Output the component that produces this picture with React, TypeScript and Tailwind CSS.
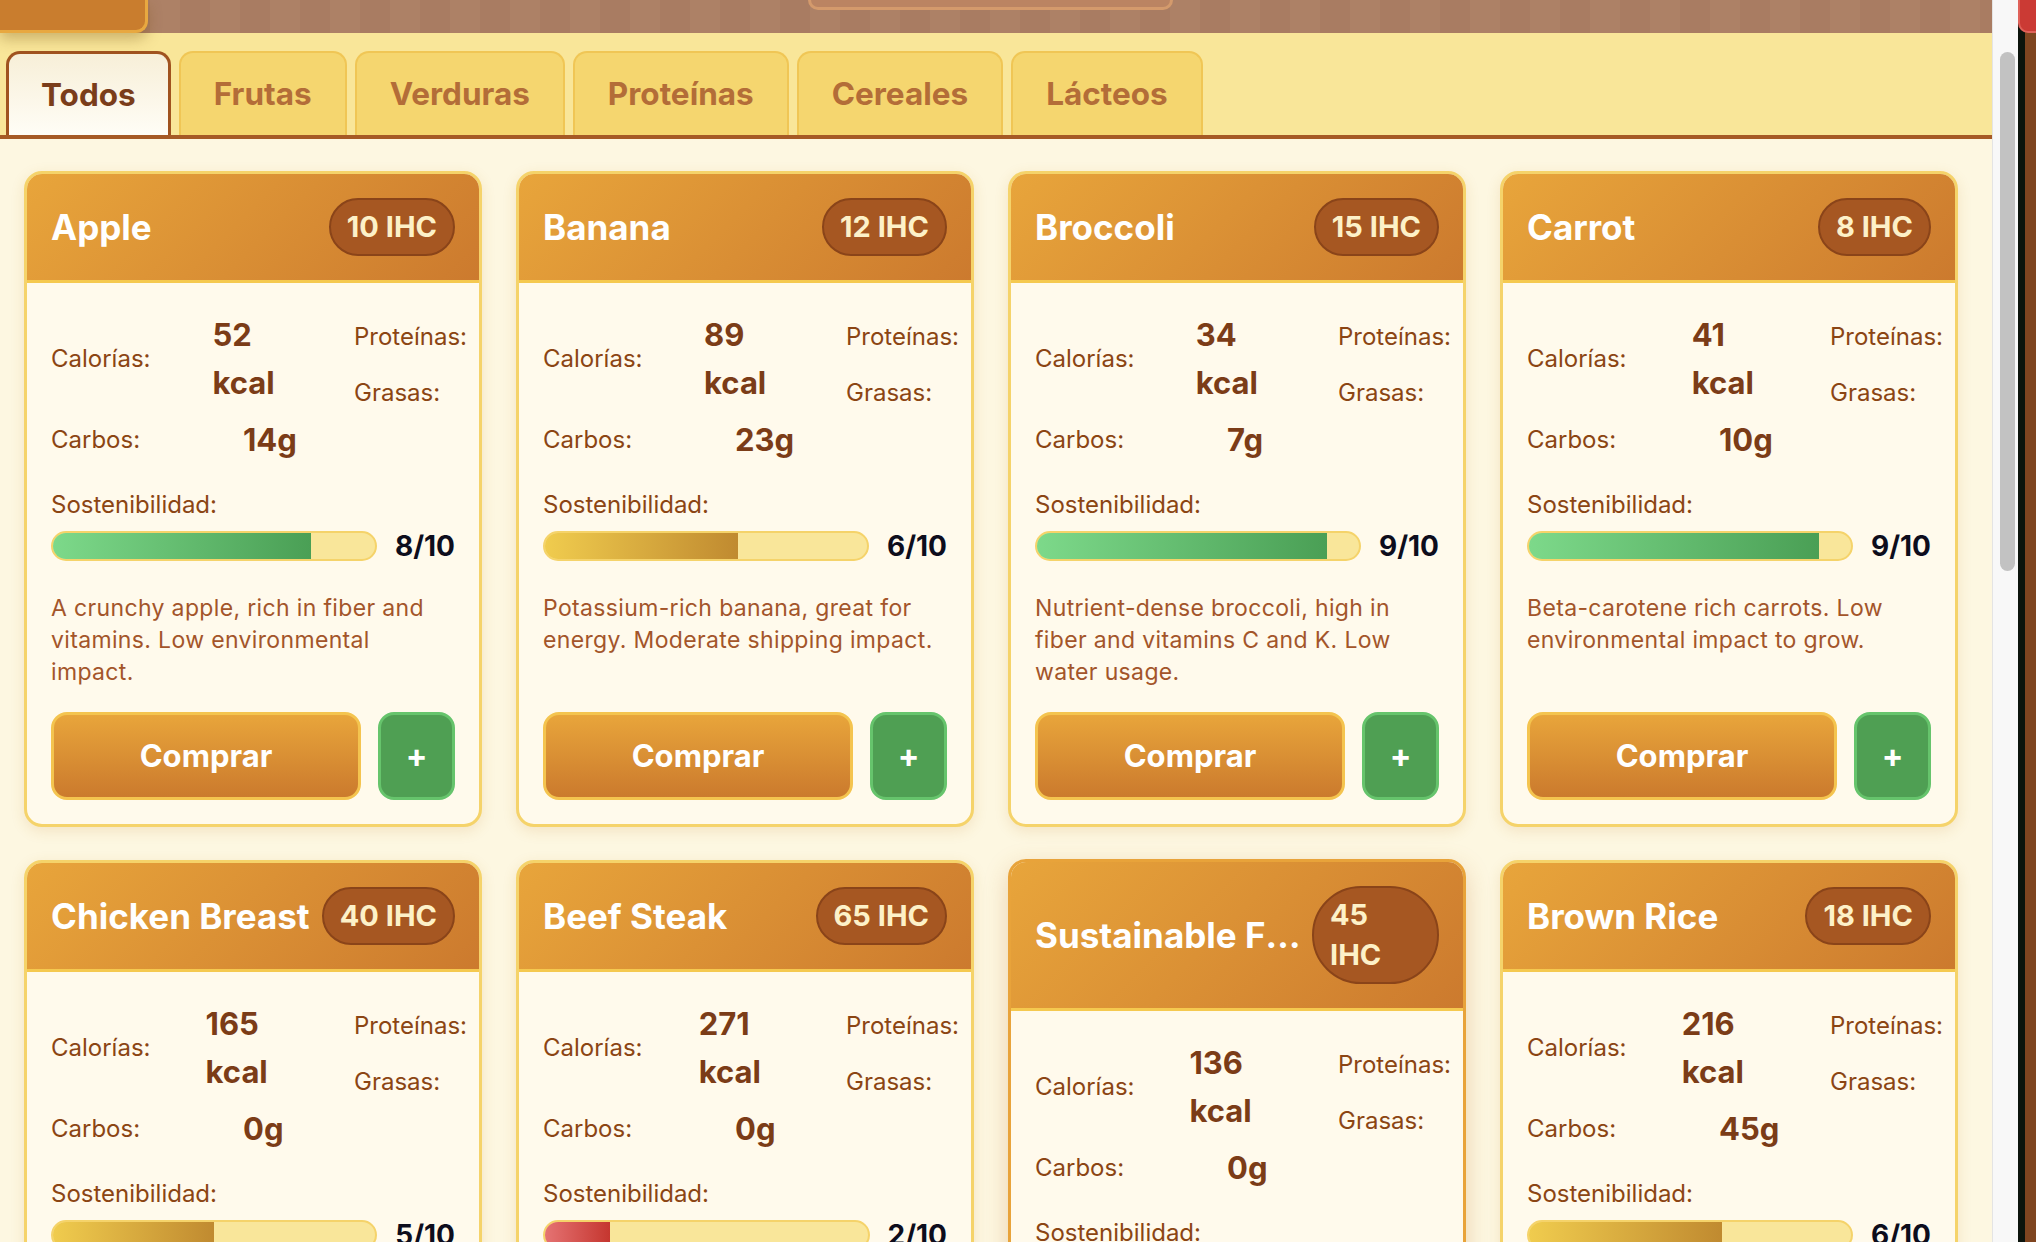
import React from 'react';

type Food = {
  name: string;
  ihc: number;
  kcal: number;
  carbs: number;
  score: number;
  text: string;
  hover?: boolean;
  wrapBadge?: boolean;
};

const foods: Food[] = [
  { name: 'Apple', ihc: 10, kcal: 52, carbs: 14, score: 8, text: 'A crunchy apple, rich in fiber and vitamins. Low environmental impact.' },
  { name: 'Banana', ihc: 12, kcal: 89, carbs: 23, score: 6, text: 'Potassium-rich banana, great for energy. Moderate shipping impact.' },
  { name: 'Broccoli', ihc: 15, kcal: 34, carbs: 7, score: 9, text: 'Nutrient-dense broccoli, high in fiber and vitamins C and K. Low water usage.' },
  { name: 'Carrot', ihc: 8, kcal: 41, carbs: 10, score: 9, text: 'Beta-carotene rich carrots. Low environmental impact to grow.' },
  { name: 'Chicken Breast', ihc: 40, kcal: 165, carbs: 0, score: 5, text: 'Lean protein source. Moderate environmental footprint from feed and water.' },
  { name: 'Beef Steak', ihc: 65, kcal: 271, carbs: 0, score: 2, text: 'High in protein and iron. Very high carbon and water footprint.' },
  { name: 'Sustainable Fish', ihc: 45, kcal: 136, carbs: 0, score: 7, text: 'Responsibly caught fish rich in omega-3. Certified fishery.', hover: true, wrapBadge: true },
  { name: 'Brown Rice', ihc: 18, kcal: 216, carbs: 45, score: 6, text: 'Whole grain rice with fiber. Moderate water usage.' },
];

const tabs = ['Todos', 'Frutas', 'Verduras', 'Proteínas', 'Cereales', 'Lácteos'];

function fillClass(score: number) {
  if (score >= 8) return 'bg-[linear-gradient(90deg,#7dd98a,#4a9f55)]';
  if (score >= 4) return 'bg-[linear-gradient(90deg,#f0cc4e,#c08a30)]';
  return 'bg-[linear-gradient(90deg,#e57373,#c5362f)]';
}

function FoodCard({ food }: { food: Food }) {
  return (
    <div
      className={
        'flex flex-col overflow-hidden rounded-[18px] border-[3px] bg-[#fffaec] ' +
        (food.hover
          ? 'border-[#e8a33a] -translate-y-[1px] shadow-[0_8px_24px_rgba(190,120,40,0.28)]'
          : 'border-[#f5d36a] shadow-[0_4px_14px_rgba(190,130,40,0.16)]')
      }
    >
      {/* header */}
      <div className="flex items-center gap-[6px] border-b-[3px] border-[#f5c94f] bg-[linear-gradient(135deg,#e8a53b,#cc7a2e)] px-6 py-6">
        <h3 className="min-w-0 flex-1 truncate text-[35px] font-bold leading-[44px] text-white">{food.name}</h3>
        <span
          className={
            'rounded-full border-2 border-[#8a4419] bg-[#a65722] px-[16px] py-[7px] text-[29px] font-bold leading-[40px] text-[#fdf1c8] ' +
            (food.wrapBadge ? 'w-[127px]' : 'shrink-0')
          }
        >
          {food.wrapBadge ? <span className="block w-min">{food.ihc} IHC</span> : `${food.ihc} IHC`}
        </span>
      </div>

      {/* body */}
      <div className="flex flex-1 flex-col px-6 pt-[28px] pb-6">
        <div className="flex text-[24px] leading-[36px] text-[#8b4513]">
          <div className="flex w-[303px] shrink-0 flex-col gap-[9px]">
            <div className="flex h-[96px] items-center">
              <span className="w-[96px] shrink-0">Calorías:</span>
              <div className="flex w-[240px] shrink-0 justify-center">
                <div className="grid text-[31px] font-bold leading-[48px] text-[#7b3c17]">
                  <span className="invisible col-start-1 row-start-1 block h-0 overflow-hidden whitespace-nowrap">
                    {food.kcal} kcal
                  </span>
                  <span className="col-start-1 row-start-1 block">
                    {food.kcal}
                    <br />
                    kcal
                  </span>
                </div>
              </div>
            </div>
            <div className="flex h-[48px] items-center">
              <span className="w-[192px] shrink-0">Carbos:</span>
              <span className="text-[31px] font-bold leading-[48px] text-[#7b3c17]">{food.carbs}g</span>
            </div>
          </div>
          <div className="flex flex-col gap-2 pt-[2px] whitespace-nowrap">
            <span className="flex h-[48px] items-center">Proteínas:</span>
            <span className="flex h-[48px] items-center">Grasas:</span>
          </div>
        </div>

        <div className="mt-[23px] text-[24px] leading-[36px] text-[#8b4513]">Sostenibilidad:</div>
        <div className="mt-[3px] flex h-[40px] items-center gap-[18px]">
          <div className="h-[30px] flex-1 overflow-hidden rounded-full border-2 border-[#f5d36a] bg-[#f9e69a]">
            <div className={'h-full ' + fillClass(food.score)} style={{ width: `${food.score * 10}%` }} />
          </div>
          <span className="text-[28px] font-bold leading-[40px] text-[#0d0d1c]">{food.score}/10</span>
        </div>

        <p className="mt-[26px] min-h-[96px] text-[23px] leading-[32px] tracking-[0.35px] text-[#a3552a]">{food.text}</p>

        <div className="mt-auto flex gap-[17px] pt-[24px]">
          <button className="h-[88px] flex-1 rounded-[16px] border-[3px] border-[#f4c44f] bg-[linear-gradient(180deg,#e8a53b,#cb7a2d)] text-[31px] font-bold text-white">
            Comprar
          </button>
          <button className="h-[88px] w-[77px] rounded-[16px] border-[3px] border-[#66c46c] bg-[#4f9f53] text-[32px] font-bold text-white">
            +
          </button>
        </div>
      </div>
    </div>
  );
}

export default function App() {
  return (
    <div className="flex h-[1242px] w-[2036px] overflow-hidden font-['Inter','Noto_Sans',sans-serif]">
      <div className="flex w-[1992px] shrink-0 flex-col bg-[#fdf7e1]">
        {/* top bar */}
        <div className="flex h-[33px] shrink-0 items-start bg-[repeating-linear-gradient(90deg,#a97c62_0_30px,#ad8166_30px_60px)]">
          <div className="relative z-10 h-[33px] w-[148px] rounded-br-[12px] border-r-[3px] border-b-[3px] border-[#e8a840] bg-[#c97d2e] shadow-[0_6px_14px_rgba(120,80,20,0.35)]" />
          <div className="ml-[660px] h-[10px] w-[365px] rounded-b-[12px] border-x-[3px] border-b-[3px] border-[#d49a6c] bg-[#bb8462]" />
        </div>

        {/* tabs */}
        <div className="flex shrink-0 items-end gap-[8px] border-b-4 border-[#a65a25] bg-[#f9e699] pt-[18px] pl-[6px]">
          {tabs.map((t, i) =>
            i === 0 ? (
              <div
                key={t}
                className="flex h-[84px] items-center rounded-t-[14px] border-[3px] border-b-0 border-[#a0531f] bg-[linear-gradient(180deg,#f7efd8,#fffdf6)] px-[32px] text-[31.5px] font-bold text-[#7a3d1a]"
              >
                {t}
              </div>
            ) : (
              <div
                key={t}
                className="flex h-[84px] items-center rounded-t-[14px] border-2 border-b-0 border-[#f0c655] bg-[#f5d66f] px-[33px] text-[31.5px] font-bold text-[#b36d38]"
              >
                {t}
              </div>
            )
          )}
        </div>

        {/* cards */}
        <div className="grid grid-cols-[repeat(4,458px)] gap-x-[34px] gap-y-[33px] pt-[32px] pl-[24px]">
          {foods.map((f) => (
            <FoodCard key={f.name} food={f} />
          ))}
        </div>
      </div>

      {/* scrollbar */}
      <div className="flex w-[26px] shrink-0 flex-col border-l border-[#e4e4e4] bg-[#f8f8f8] pt-[52px] pl-[7px]">
        <div className="h-[519px] w-[15px] rounded-full bg-[#c2c2c2]" />
      </div>
      <div className="relative flex w-[18px] shrink-0">
        <div className="w-[7px] bg-[#0c140c]" />
        <div className="flex-1 bg-[#7f4520]" />
        <div className="absolute top-0 left-0 h-[33px] w-full rounded-bl-[10px] border-b-2 border-l-2 border-[#e0625a] bg-[#cb3a34]" />
      </div>
    </div>
  );
}
